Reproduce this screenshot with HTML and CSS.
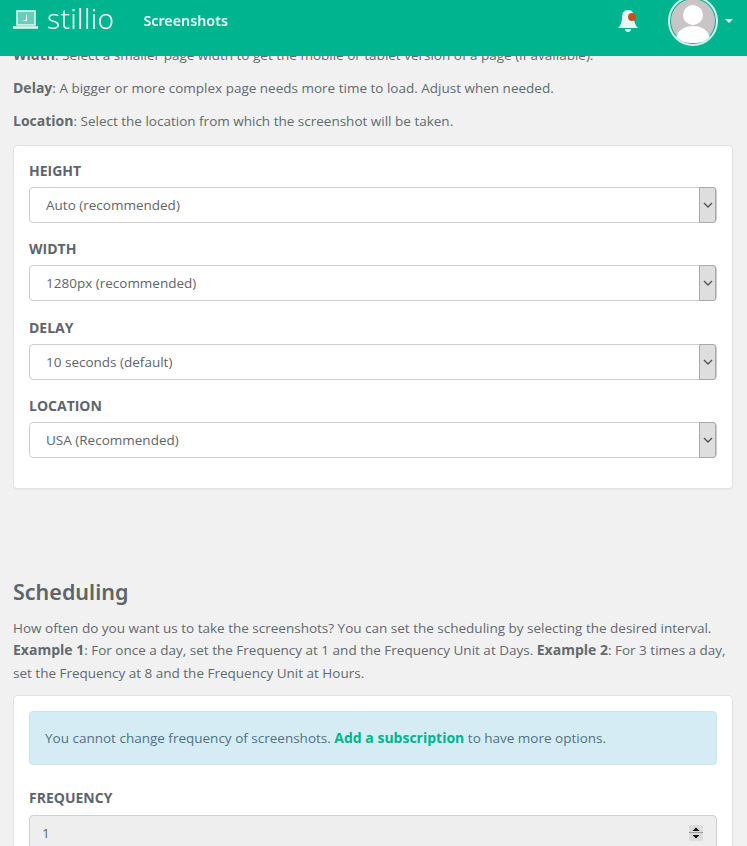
FILE: index.html
```html
<!DOCTYPE html>
<html lang="en">
  <head>
    <meta charset="UTF-8" />
    <meta name="viewport" content="width=device-width, initial-scale=1.0" />
    <title>Stillio - Screenshots</title>
    <link rel="stylesheet" href="styles.css">
  </head>
  <body>
    <header class="topbar">
      <a class="brand" href="#">
        <svg class="brand-icon" width="26" height="20" viewBox="0 0 26 20">
          <rect x="4" y="1" width="18" height="14" fill="#66cfb9" stroke="#e8faf6" stroke-width="1.5" />
          <path d="M0 17.500h25" stroke="#e8faf6" stroke-width="2.500" />
          <path d="M13.500 4.500v6h-3" fill="none" stroke="#fff" stroke-width="1" />
        </svg>
        <span class="brand-name">stillio</span>
      </a>
      <a class="nav-link" href="#">Screenshots</a>
      <div class="topbar-right">
        <span class="bell">
          <svg width="24" height="26" viewBox="0 0 24 26">
            <path d="M12 2c-4 0-6 3-6 7 0 5-1 8-4 11h20c-3-3-4-6-4-11 0-4-2-7-6-7z" fill="#e6faf5" />
            <path d="M9 21a3 3 0 0 0 6 0z" fill="#e6faf5" />
            <circle cx="16" cy="9" r="4" fill="#c8501f" />
          </svg>
        </span>
        <span class="avatar">
          <svg width="44" height="44" viewBox="0 0 44 44">
            <circle cx="22" cy="22" r="22" fill="#c9c5c7" />
            <circle cx="22" cy="16" r="10" fill="#fff" />
            <path d="M5 40c1-9 9-13 17-13s16 4 17 13c-4 3-10 4-17 4S9 43 5 40z" fill="#fff" />
          </svg>
        </span>
        <span class="caret"></span>
      </div>
    </header>

    <main class="content">
      <p><b>Width</b>: Select a smaller page width to get the mobile or tablet version of a page (if available).</p>
      <p><b>Delay</b>: A bigger or more complex page needs more time to load. Adjust when needed.</p>
      <p><b>Location</b>: Select the location from which the screenshot will be taken.</p>

      <section class="card card-settings">
        <div class="field">
          <label>Height</label>
          <div class="select-wrap">
            <select><option>Auto (recommended)</option></select>
            <span class="select-btn"><svg width="10" height="6" viewBox="0 0 10 6"><path d="M1 1l4 4 4-4" fill="none" stroke="#555" stroke-width="1.400" /></svg></span>
          </div>
        </div>
        <div class="field">
          <label>Width</label>
          <div class="select-wrap">
            <select><option>1280px (recommended)</option></select>
            <span class="select-btn"><svg width="10" height="6" viewBox="0 0 10 6"><path d="M1 1l4 4 4-4" fill="none" stroke="#555" stroke-width="1.400" /></svg></span>
          </div>
        </div>
        <div class="field">
          <label>Delay</label>
          <div class="select-wrap">
            <select><option>10 seconds (default)</option></select>
            <span class="select-btn"><svg width="10" height="6" viewBox="0 0 10 6"><path d="M1 1l4 4 4-4" fill="none" stroke="#555" stroke-width="1.400" /></svg></span>
          </div>
        </div>
        <div class="field">
          <label>Location</label>
          <div class="select-wrap">
            <select><option>USA (Recommended)</option></select>
            <span class="select-btn"><svg width="10" height="6" viewBox="0 0 10 6"><path d="M1 1l4 4 4-4" fill="none" stroke="#555" stroke-width="1.400" /></svg></span>
          </div>
        </div>
      </section>

      <h2>Scheduling</h2>
      <p class="intro">How often do you want us to take the screenshots? You can set the scheduling by selecting the desired interval. <b>Example 1</b>: For once a day, set the Frequency at 1 and the Frequency Unit at Days. <b>Example 2</b>: For 3 times a day, set the Frequency at 8 and the Frequency Unit at Hours.</p>

      <section class="card card-schedule">
        <div class="alert">You cannot change frequency of screenshots. <a href="#">Add a subscription</a> to have more options.</div>
        <div class="field">
          <label>Frequency</label>
          <div class="number-wrap">
            <input type="text" value="1" disabled />
            <span class="spinner">
              <svg width="14" height="16" viewBox="0 0 14 16">
                <rect width="14" height="16" fill="#dcdcdc" />
                <path d="M0 7.500h14" stroke="#999" />
                <path d="M7 2.500l3.500 3.500h-7zM7 13.500l3.500-3.500h-7z" fill="#111" />
              </svg>
            </span>
          </div>
        </div>
      </section>
    </main>
  </body>
</html>
```

FILE: styles.css
```css
html, body {
  height: 846px;
  overflow: hidden;
}
body {
  font-family: "Open Sans", Arial, sans-serif;
  font-size: 13.5px;
  line-height: 22.4px;
  color: #616a6f;
  margin: 0;
  background-color: #f1f1f1;
}
.topbar {
  position: fixed;
  top: 0;
  left: 0;
  right: 0;
  z-index: 5;
  height: 56px;
  background-color: #00b48f;
  display: flex;
  align-items: flex-start;
  padding: 0 14px 0 13px;
  box-sizing: border-box;
}
.brand {
  display: flex;
  align-items: center;
  gap: 8px;
  height: 37px;
  color: #fff;
  text-decoration: none;
}
.brand-icon {
  flex: none;
  margin-top: 2px;
}
.brand-name {
  font-family: "Noto Sans", sans-serif;
  font-weight: 300;
  font-size: 28px;
  letter-spacing: 0.3px;
}
.nav-link {
  margin-left: 29px;
  margin-top: 10px;
  font-family: "Noto Sans", sans-serif;
  font-weight: 600;
  font-size: 14.3px;
  color: #e8faf6;
  text-decoration: none;
}
.topbar-right {
  margin-left: auto;
  display: flex;
  align-items: center;
  height: 42px;
}
.bell {
  display: flex;
  margin-top: 0;
  margin-right: 28px;
}
.avatar {
  display: flex;
  flex: none;
  padding: 1px;
  border: 2px solid #d5f3ec;
  border-radius: 50%;
  overflow: hidden;
}
.caret {
  width: 0;
  height: 0;
  border-left: 4px solid transparent;
  border-right: 4px solid transparent;
  border-top: 4px solid #e8faf6;
  margin-left: 7px;
}
.content {
  padding: 44px 14px 0 13px;
}
.content p {
  margin: 0 0 10.6px;
}
.content b {
  font-size: 14px;
  font-weight: 700;
}
.card {
  background-color: #fff;
  border: 1px solid #dfe3e6;
  border-radius: 4px;
  padding: 15px;
  box-shadow: 0 1px 1px rgba(0, 0, 0, 0.04);
}
.card-settings {
  margin-top: 12.6px;
  height: 344px;
  box-sizing: border-box;
}
.field {
  margin-bottom: 16.33px;
}
.field label {
  display: block;
  font-size: 14px;
  font-weight: 700;
  text-transform: uppercase;
  color: #5e6569;
  line-height: 20px;
  margin-bottom: 6px;
}
.select-wrap, .number-wrap {
  position: relative;
}
.select-wrap select, .number-wrap input {
  display: block;
  width: 100%;
  height: 36px;
  box-sizing: border-box;
  border: 1px solid #c9cdd0;
  border-radius: 4px;
  background-color: #fff;
  padding: 0 16px;
  font-family: inherit;
  font-size: 13.5px;
  color: #5f6569;
  appearance: none;
}
.select-btn {
  position: absolute;
  top: 0;
  right: 1px;
  width: 17px;
  height: 36px;
  box-sizing: border-box;
  display: flex;
  align-items: center;
  justify-content: center;
  background-color: #dedede;
  border: 1px solid #a9a9a9;
  border-radius: 0 3px 3px 0;
}
h2 {
  font-family: "Noto Sans", sans-serif;
  font-weight: 600;
  font-size: 21.5px;
  line-height: 30px;
  color: #5e6569;
  margin: 88px 0 10px;
}
.content .intro {
  margin-bottom: 10.4px;
}
.alert {
  background-color: #d6ecf5;
  border: 1px solid #c5e6ee;
  border-radius: 4px;
  color: #4f7283;
  padding: 15px;
  height: 54px;
  box-sizing: border-box;
  margin-bottom: 23px;
}
.alert a {
  color: #00b48f;
  font-size: 14px;
  font-weight: 700;
  text-decoration: none;
}
.card-schedule .field label {
  margin-bottom: 7px;
}
.number-wrap input {
  background-color: #eeeeee;
  padding: 0 12px;
  border-color: #cfcfcf;
}
.spinner {
  position: absolute;
  top: 10px;
  right: 14px;
  display: flex;
}
```
